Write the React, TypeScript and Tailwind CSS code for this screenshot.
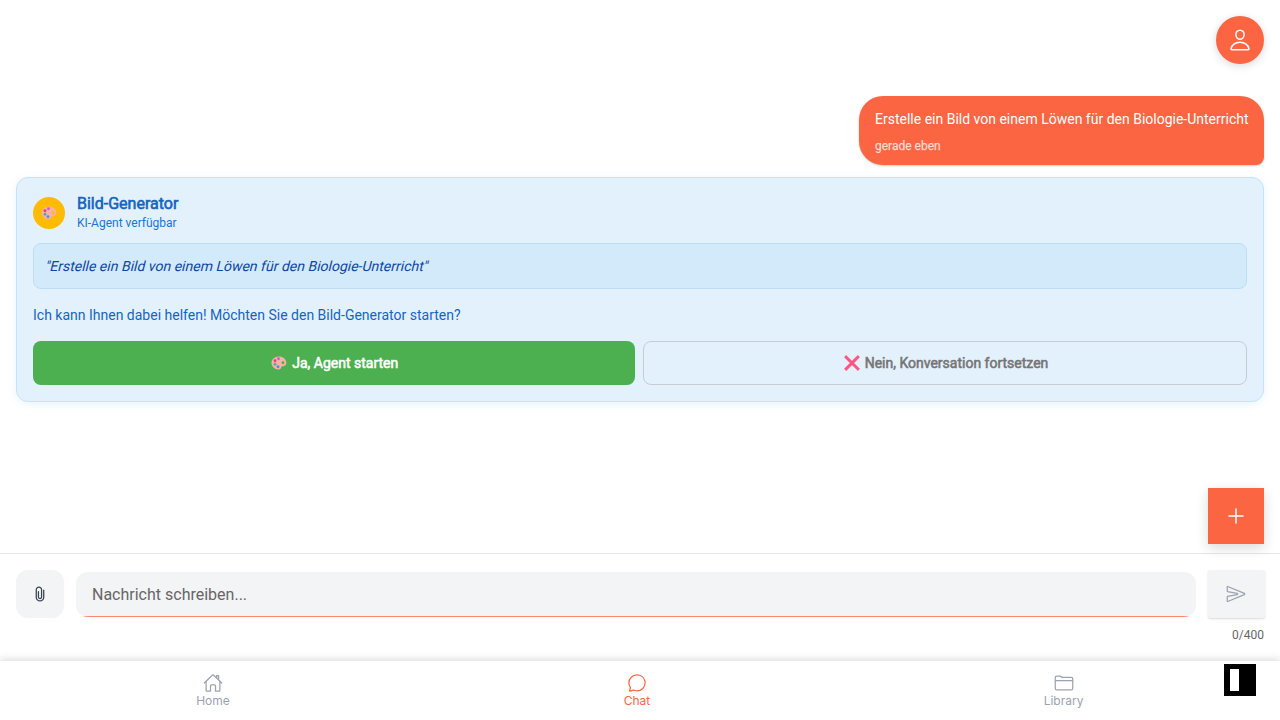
import React from "react";
import {
  IoPersonOutline,
  IoAttachOutline,
  IoSendOutline,
  IoHomeOutline,
  IoChatbubbleOutline,
  IoFolderOutline,
} from "react-icons/io5";

const prompt = "Erstelle ein Bild von einem Löwen für den Biologie-Unterricht";

const tabs = [
  { label: "Home", Icon: IoHomeOutline, tone: "text-[#9ca3af]", cell: "w-[426px]" },
  { label: "Chat", Icon: IoChatbubbleOutline, tone: "text-[#fb6542]", cell: "w-[422px]" },
  { label: "Library", Icon: IoFolderOutline, tone: "text-[#9ca3af]", cell: "w-[431px]" },
];

function Palette({ hole }: { hole: string }) {
  return (
    <svg width="16" height="16" viewBox="0 0 32 32" aria-hidden="true">
      <path d="M16 3C8 3 1 8.500 1 15.500c0 6.500 5 11.500 11 13 3 1 6 .5 7.500-1.500 1.200-1.600.8-3.200 2-4 1-.6 3-.2 4.500-.8 3-1.200 5-4 4.700-7.200C30 7.500 23.500 3 16 3Z" fill="#fbb0a4" />
      <circle cx="24" cy="15.500" r="2.800" fill={hole} />
      <circle cx="15" cy="7.500" r="2.900" fill="#c25fd8" />
      <circle cx="8" cy="11.500" r="2.900" fill="#ed3e78" />
      <circle cx="8" cy="18.500" r="2.900" fill="#42b3a5" />
      <circle cx="14" cy="23.500" r="2.900" fill="#4593ed" />
    </svg>
  );
}

function Cross() {
  return (
    <svg width="16" height="16" viewBox="0 0 16 16" aria-hidden="true">
      <path d="M2.200 2.200 13.800 13.800M13.800 2.200 2.200 13.800" stroke="#ff5580" strokeWidth="3" strokeLinecap="square" />
    </svg>
  );
}

function AgentCard() {
  return (
    <section className="mt-3 h-[225px] rounded-[12px] border border-[#c3e3fc] bg-[#e3f1fd] px-4 pt-[15px] shadow-[0_2px_8px_rgba(33,150,243,0.1)]">
      <header className="-ml-[0.5px] flex items-center gap-3">
        <div className="flex size-8 items-center justify-center rounded-full bg-[#ffbb00] pt-px">
          <Palette hole="#ffbb00" />
        </div>
        <div className="pl-[0.5px]">
          <h2 className="text-[16px] leading-[21px] font-normal text-[#1565c0] [-webkit-text-stroke:0.6px_#1565c0]">Bild-Generator</h2>
          <p className="text-[12px] leading-[18px] text-[#1976d2]">KI-Agent verfügbar</p>
        </div>
      </header>
      <div className="mt-[11px] -ml-[0.5px] h-[46px] rounded-[8px] border border-[#bbdefb] bg-[#d3eafb] px-[13px] text-[14px] leading-[44px] text-[#0d47a1]">
        <span className="-ml-px inline-block -skew-x-[14deg]">"{prompt}"</span>
      </div>
      <p className="mt-4 text-[14px] leading-[20px] text-[#1565c0]">
        Ich kann Ihnen dabei helfen! Möchten Sie den Bild-Generator starten?
      </p>
      <div className="mt-4 -ml-[0.5px] flex gap-2 text-[14px] font-normal">
        <button className="flex h-[44px] w-[602.5px] items-center justify-center gap-[5px] rounded-[8px] bg-[#4caf50] pl-[2px] text-white [-webkit-text-stroke:0.55px_#ffffff]">
          <Palette hole="#4caf50" />
          <span>Ja, Agent starten</span>
        </button>
        <button className="flex h-[44px] flex-1 items-center justify-center gap-[5px] rounded-[8px] border border-[#c5cdd3] pl-[2px] text-[#757575] [-webkit-text-stroke:0.55px_#757575]">
          <Cross />
          <span>Nein, Konversation fortsetzen</span>
        </button>
      </div>
    </section>
  );
}

export default function App() {
  return (
    <div className="relative flex h-[720px] w-[1280px] flex-col overflow-hidden bg-white font-[Roboto,sans-serif]">
      <main className="flex h-[553px] flex-col px-4 pt-4">
        <button className="flex size-12 shrink-0 items-center justify-center self-end rounded-full bg-[#fb6542] text-white shadow-[0_2px_8px_rgba(0,0,0,0.15)]">
          <IoPersonOutline size={24} />
        </button>
        <div className="mt-8 h-[69px] w-[405.5px] self-end rounded-[24px] rounded-br-[8px] bg-[#fb6542] pt-3 pl-[16.5px] whitespace-nowrap text-white shadow-[0_1px_2px_rgba(0,0,0,0.2)]">
          <p className="text-[14px] leading-[22px]">{prompt}</p>
          <p className="mt-[7px] text-[12px] leading-[18px] text-[#fed8cf] [-webkit-text-stroke:0.25px_#fed8cf]">gerade eben</p>
        </div>
        <AgentCard />
      </main>

      <footer className="flex h-[108px] gap-3 border-t border-[#e5e7eb] px-4 pt-4">
        <button className="flex size-12 items-center justify-center rounded-[12px] bg-[#f3f4f6] text-[#374151]">
          <IoAttachOutline size={20} />
        </button>
        <div className="relative mt-[2px] flex h-[45px] w-[1120px] shrink-0 items-center overflow-hidden rounded-[12px] bg-[#f3f4f6] px-4 pt-px text-[16px] text-[#666666]">
          Nachricht schreiben...
          <span className="absolute inset-x-0 bottom-0 h-px bg-[#fb8a70]" />
        </div>
        <div className="-mr-[0.5px] -ml-[0.5px] flex w-[57px] shrink-0 flex-col items-end">
          <button className="flex h-12 w-full items-center justify-center rounded-[2px] bg-[#f3f4f6] text-[#9ca3af] shadow-[0_1px_2px_rgba(0,0,0,0.15)]">
            <IoSendOutline size={20} />
          </button>
          <span className="mt-[8px] mr-[0.5px] text-[12px] leading-[18px] text-[#666666]">0/400</span>
        </div>
      </footer>

      <nav className="relative flex h-[59px] bg-white font-[Inter,sans-serif] text-[12px] shadow-[0_-1px_8px_rgba(0,0,0,0.16)]">
        {tabs.map(({ label, Icon, tone, cell }) => (
          <div key={label} className={`flex flex-col items-center pt-[12px] ${cell} ${tone}`}>
            <Icon size={20} />
            <span className="leading-[16px]">{label}</span>
          </div>
        ))}
      </nav>

      <button className="absolute top-[488px] right-4 flex size-14 items-center justify-center bg-[#fb6542] text-white shadow-[0_4px_12px_rgba(0,0,0,0.15)]">
        <svg width="24" height="24" viewBox="0 0 24 24" aria-hidden="true">
          <path d="M12 5v14M5 12h14" stroke="currentColor" strokeWidth="1.5" strokeLinecap="round" />
        </svg>
      </button>
      <div className="absolute top-[664px] left-[1224px] size-8 bg-black pt-[5px] pl-[6px]">
        <div className="h-[22px] w-[9px] bg-white" />
      </div>
    </div>
  );
}
